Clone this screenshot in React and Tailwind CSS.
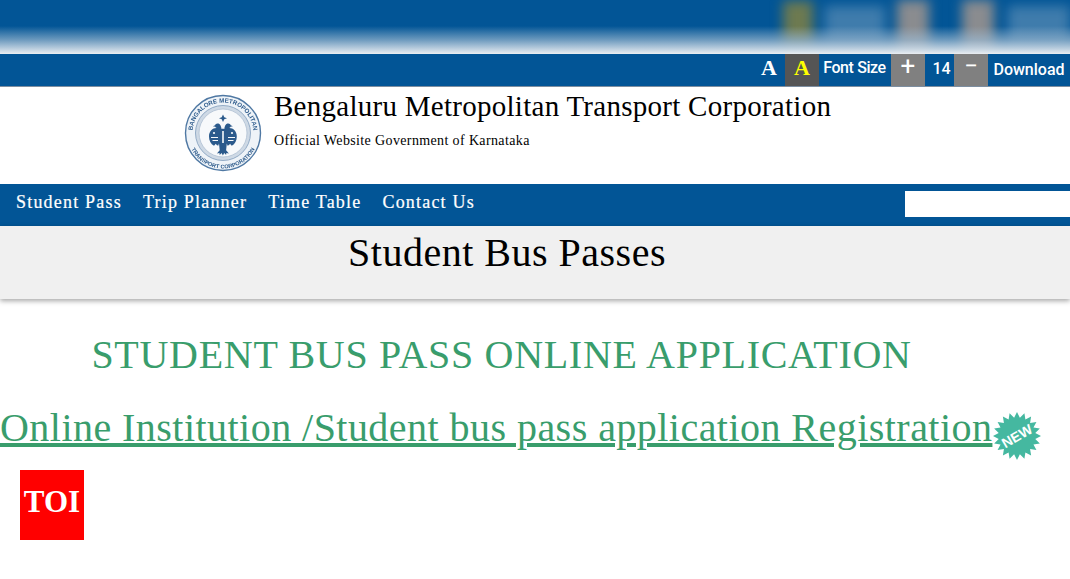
import React from 'react';

const NAV_ITEMS = ['Student Pass', 'Trip Planner', 'Time Table', 'Contact Us'];

// 20-pointed star badge behind the NEW label
const starPoints = (() => {
  const pts = [];
  for (let i = 0; i < 40; i++) {
    const r = i % 2 === 0 ? 24 : 18.5;
    const a = (i * Math.PI) / 20;
    pts.push(`${(24 + r * Math.cos(a)).toFixed(2)},${(24 + r * Math.sin(a)).toFixed(2)}`);
  }
  return pts.join(' ');
})();

function NewBadge() {
  return (
    <svg width="48" height="48" viewBox="0 0 48 48" className="mt-[15px] ml-[1px] shrink-0">
      <polygon points={starPoints} fill="#45b8a0" />
      <text
        x="24"
        y="29"
        textAnchor="middle"
        fontSize="14"
        fontWeight="700"
        fill="#ffffff"
        fontFamily="'Liberation Sans', sans-serif"
        transform="rotate(-30 24 24)"
      >
        NEW
      </text>
    </svg>
  );
}

function Seal() {
  return (
    <svg width="78" height="78" viewBox="0 0 78 78" className="shrink-0 blur-[0.4px]">
      <defs>
        <path id="sealTop" d="M8.5 39a30.5 30.5 0 0 1 61 0" />
        <path id="sealBottom" d="M3.5 39a35.5 35.5 0 0 0 71 0" />
      </defs>
      <circle cx="39" cy="39" r="37.5" fill="#eef3f8" stroke="#4f78a3" strokeWidth="1.4" />
      <circle cx="39" cy="39" r="27.5" fill="#ced9e5" stroke="#7f9cbb" strokeWidth="0.8" />
      <circle cx="39" cy="39" r="24" fill="#f7f9fb" stroke="#aebfd2" strokeWidth="0.8" />
      <text fontSize="6.2" fontWeight="700" fill="#2f5c8c" fontFamily="'Liberation Sans', sans-serif">
        <textPath href="#sealTop" startOffset="50%" textAnchor="middle">
          BANGALORE METROPOLITAN
        </textPath>
      </text>
      <text fontSize="5.6" fontWeight="700" fill="#2f5c8c" fontFamily="'Liberation Sans', sans-serif">
        <textPath href="#sealBottom" startOffset="50%" textAnchor="middle">
          TRANSPORT CORPORATION
        </textPath>
      </text>
      {/* two-headed bird */}
      <g fill="#2b5a8c">
        <path d="M39 20.5l1.3 2.7 2.7 1-2.7 1-1.3 2.7-1.3-2.7-2.7-1 2.7-1z" />
        <path d="M37.5 35c-.2-2.4-1.2-4.6-3-5.4-1.6-.6-3 .2-3.4 1.6l-2.2 1 2.4.6c.4 1 1.2 1.4 2.2 1.4-4.200-.8-8.500 2.800-8.500 8.200 0 4 1.800 7.600 5 9.400.8-.6 1.300-1.200 1.700-2 .6 1 1.400 1.600 2.500 2l.8-2.400.7 6.800-2.800 3.300 2.500-.6.300 2.100 1.900-2 1.300 2.500 1.300-2.500 1.900 2 .3-2.100 2.500.6-2.800-3.300.7-6.800.8 2.400c1.100-.4 1.900-1 2.500-2 .4.800.9 1.400 1.700 2 3.200-1.800 5-5.400 5-9.400 0-5.400-4.300-9-8.500-8.200 1 0 1.800-.4 2.200-1.400l2.400-.6-2.200-1c-.4-1.400-1.800-2.200-3.400-1.600-1.800.8-2.800 3-3 5.400-.5-.2-1-.3-1.500-.3s-1 .1-1.500.3z" />
      </g>
      <g fill="#f7f9fb">
        <circle cx="30" cy="39" r="1.100" />
        <circle cx="48" cy="39" r="1.100" />
        <path d="M38.200 37h1.600v12h-1.600zM27 43h7v.9h-7zM44 43h7v.9h-7zM28.500 46h5.500v.9h-5.500zM44 46h5.500v.9H44z" />
      </g>
    </svg>
  );
}

// Blurred strip along the top of the page: soft shapes fading out to white
function BlurredStrip() {
  return (
    <div className="relative h-[54px] overflow-hidden bg-[#025596]">
      <div className="flex h-[50px] items-stretch pl-[783px] blur-[6px]">
        <div className="mt-[1px] h-[44px] w-[30px] bg-[#6d7a50]" />
        <div className="mx-[12px] mt-[6px] h-[36px] w-[60px] bg-[#3f7cac]" />
        <div className="h-[50px] w-[32px] bg-[#8a8c8f]" />
        <div className="w-[33px]" />
        <div className="h-[50px] w-[32px] bg-[#8a8c8f]" />
        <div className="mt-[6px] ml-[14px] h-[36px] w-[62px] bg-[#3f7cac]" />
      </div>
      <div className="absolute inset-x-0 bottom-0 h-[28px] bg-gradient-to-b from-[#025596]/0 via-[#9db9d0]/70 to-[#eaeef2]" />
    </div>
  );
}

function TopBar() {
  return (
    <div className="flex h-[33px] items-stretch justify-end border-b border-[#7d8ea0] bg-[#025596] text-white">
      <span className="mr-[8px] mb-[5px] self-center font-['Liberation_Serif',serif] text-[22px] leading-[26px] font-bold">
        A
      </span>
      <span className="flex w-[34px] items-center justify-center bg-[#555555] pb-[5px] font-['Liberation_Serif',serif] text-[22px] font-bold text-[#ffff00]">
        A
      </span>
      <span className="mb-[5px] flex w-[72px] items-center justify-center pr-[1px] font-['Roboto',sans-serif] text-[16px] font-medium tracking-[-0.4px]">
        Font Size
      </span>
      <span className="flex w-[34px] items-start justify-center bg-[#808080] font-['Roboto',sans-serif] text-[26px] leading-[25px]">
        +
      </span>
      <span className="mb-[3px] flex w-[29px] items-center justify-center pl-[4px] font-['Roboto',sans-serif] text-[16px] font-medium">
        14
      </span>
      <span className="flex w-[34px] items-start justify-center bg-[#808080] font-['Roboto',sans-serif] text-[24px] leading-[24px]">
        −
      </span>
      <span className="flex w-[82px] items-center justify-center font-['Roboto',sans-serif] text-[16px] font-medium">
        Download
      </span>
    </div>
  );
}

export default function App() {
  return (
    <div className="relative h-[579px] w-[1070px] overflow-hidden bg-white font-['Liberation_Serif',serif] text-black">
      <BlurredStrip />
      <TopBar />

      {/* Site header */}
      <div className="flex h-[97px] items-start gap-[12px] pt-[7px] pl-[184px]">
        <Seal />
        <div>
          <div className="mt-[-4px] text-[29px] leading-[32px] tracking-[0.27px]">
            Bengaluru Metropolitan Transport Corporation
          </div>
          <div className="mt-[10px] text-[14px] leading-[18px] tracking-[0.37px]">
            Official Website Government of Karnataka
          </div>
        </div>
      </div>

      {/* Main nav */}
      <div className="flex h-[42px] items-center justify-between bg-[#025596] pl-[16px] text-white">
        <div className="mb-[5px] flex gap-[21px] text-[18px] tracking-[1.2px] [-webkit-text-stroke:0.2px_white]">
          {NAV_ITEMS.map((item) => (
            <span key={item}>{item}</span>
          ))}
        </div>
        <input type="text" aria-label="Search" className="mb-[2px] h-[26px] w-[165px] bg-white" />
      </div>

      {/* Page title */}
      <div className="h-[73px] bg-[#f0f0f0] pt-[4px] pr-[56px] text-center text-[40px] leading-[46px] tracking-[0.5px] shadow-[0_2px_5px_rgba(0,0,0,0.35)]">
        Student Bus Passes
      </div>

      {/* Content */}
      <div className="pt-[31px] text-[#399d6c]">
        <div className="pr-[67px] text-center text-[40px] leading-[50px] tracking-[0.7px]">
          STUDENT BUS PASS ONLINE APPLICATION
        </div>
        <div className="mt-[21px] flex h-[54px] items-center">
          <a href="#" className="text-[40px] leading-[50px] tracking-[0.46px] whitespace-nowrap underline">
            Online Institution /Student bus pass application Registration
          </a>
          <NewBadge />
        </div>
      </div>

      {/* TOI watermark */}
      <div className="absolute top-[470px] left-[20px] flex h-[70px] w-[64px] items-center justify-center bg-[#ff0000] pb-[6px] text-[31px] font-bold text-white">
        TOI
      </div>
    </div>
  );
}
